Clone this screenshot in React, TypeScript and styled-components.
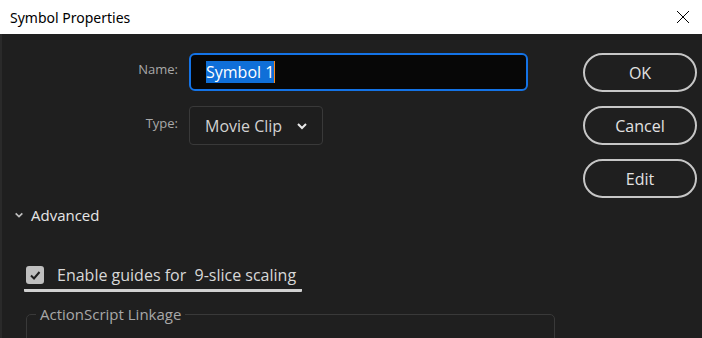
import styled, { createGlobalStyle } from "styled-components";

const GlobalStyle = createGlobalStyle`
  html, body {
    margin: 0;
    padding: 0;
    background: #1f1f1f;
    overflow: hidden;
  }
  body {
    font-family: "Open Sans", "Noto Sans", sans-serif;
  }
`;

const Window = styled.div`
  width: 702px;
  height: 338px;
  display: flex;
  flex-direction: column;
  background: #1f1f1f;
  overflow: hidden;
`;

const TitleBar = styled.div`
  height: 34px;
  flex-shrink: 0;
  background: #ffffff;
  display: flex;
  align-items: center;
  justify-content: space-between;
  padding: 0 10px 0 10px;
  font-family: "Noto Sans", sans-serif;
  font-size: 14px;
  color: #000;
`;

const CloseButton = styled.div`
  width: 14px;
  height: 14px;
  margin-right: 2px;
  display: flex;
`;

const Body = styled.div`
  flex: 1;
  padding: 19px 0 0 0;
  border-left: 2px solid #2a2a2a;
  display: flex;
  flex-direction: column;
`;

const TopSection = styled.div`
  display: flex;
  align-items: flex-start;
`;

const Form = styled.div`
  display: grid;
  grid-template-columns: 176px 339px;
  column-gap: 11px;
  row-gap: 15px;
  align-items: center;
`;

const Label = styled.label`
  text-align: right;
  color: #a8a8a8;
  font-size: 13px;
  margin-top: -6px;
`;

const NameInput = styled.div`
  height: 38px;
  box-sizing: border-box;
  border: 2px solid #1473e6;
  border-radius: 6px;
  background: #070707;
  display: flex;
  align-items: center;
  padding-left: 15px;
`;

const Selected = styled.span`
  background: #0f6fd8;
  color: #ffffff;
  font-size: 16px;
  line-height: 22px;
  border-right: 1px solid #ff8a1c;
`;

const Dropdown = styled.div`
  width: 134px;
  height: 39px;
  box-sizing: border-box;
  border: 1px solid #393939;
  border-radius: 4px;
  background: #1e1e1e;
  display: flex;
  align-items: center;
  justify-content: space-between;
  padding: 0 14px 0 15px;
  color: #d2d2d2;
  font-size: 16px;
`;

const Buttons = styled.div`
  margin-left: 55px;
  display: flex;
  flex-direction: column;
  gap: 14px;
`;

const PillButton = styled.button`
  width: 114px;
  height: 39px;
  box-sizing: border-box;
  border: 2px solid #c6c6c6;
  border-radius: 20px;
  background: transparent;
  color: #e2e2e2;
  font-family: "Open Sans", sans-serif;
  font-size: 16px;
  padding: 0;
`;

const AdvancedRow = styled.div`
  margin-top: 6px;
  padding-left: 12px;
  display: flex;
  align-items: center;
  gap: 7px;
  height: 22px;
  color: #e6e6e6;
  font-size: 15px;
`;

const CheckRow = styled.div`
  margin-top: 38px;
  margin-left: 22px;
  width: 276px;
  padding: 0 0 3px 2px;
  border-bottom: 3px solid #d0d0d0;
  border-radius: 0 0 1px 1px;
  display: flex;
  align-items: center;
  gap: 13px;
  color: #d8d8d8;
  font-size: 16px;
  white-space: pre;
`;

const CheckBox = styled.div`
  width: 18px;
  height: 18px;
  border-radius: 3px;
  background: #bfbfbf;
  display: flex;
  align-items: center;
  justify-content: center;
`;

const Fieldset = styled.fieldset`
  margin: 12px 0 0 24px;
  width: 529px;
  height: 60px;
  box-sizing: border-box;
  border: 1px solid #393939;
  border-radius: 5px;
  padding: 0 9px;
`;

const Legend = styled.legend`
  color: #a8a8a8;
  font-size: 15px;
  padding: 0 4px;
`;

const Chevron = ({ size = 12, color = "#e0e0e0" }: { size?: number; color?: string }) => (
  <svg width={size} height={size} viewBox="0 0 12 12">
    <path d="M2 4 L6 8 L10 4" fill="none" stroke={color} strokeWidth="2" />
  </svg>
);

export default function App() {
  return (
    <Window>
      <GlobalStyle />
      <TitleBar>
        <span>Symbol Properties</span>
        <CloseButton>
          <svg width="14" height="14" viewBox="0 0 14 14">
            <path d="M1 1 L13 13 M13 1 L1 13" stroke="#000" strokeWidth="1" />
          </svg>
        </CloseButton>
      </TitleBar>
      <Body>
        <TopSection>
          <Form>
            <Label>Name:</Label>
            <NameInput>
              <Selected>Symbol 1</Selected>
            </NameInput>
            <Label>Type:</Label>
            <Dropdown>
              <span>Movie Clip</span>
              <Chevron size={12} color="#e8e8e8" />
            </Dropdown>
          </Form>
          <Buttons>
            <PillButton>OK</PillButton>
            <PillButton>Cancel</PillButton>
            <PillButton>Edit</PillButton>
          </Buttons>
        </TopSection>
        <AdvancedRow>
          <Chevron size={10} color="#bdbdbd" />
          <span>Advanced</span>
        </AdvancedRow>
        <CheckRow>
          <CheckBox>
            <svg width="12" height="12" viewBox="0 0 12 12">
              <path d="M2 6.5 L5 9.5 L10.5 3" fill="none" stroke="#1f1f1f" strokeWidth="2" />
            </svg>
          </CheckBox>
          <span>Enable guides for  9-slice scaling</span>
        </CheckRow>
        <Fieldset>
          <Legend>ActionScript Linkage</Legend>
        </Fieldset>
      </Body>
    </Window>
  );
}
